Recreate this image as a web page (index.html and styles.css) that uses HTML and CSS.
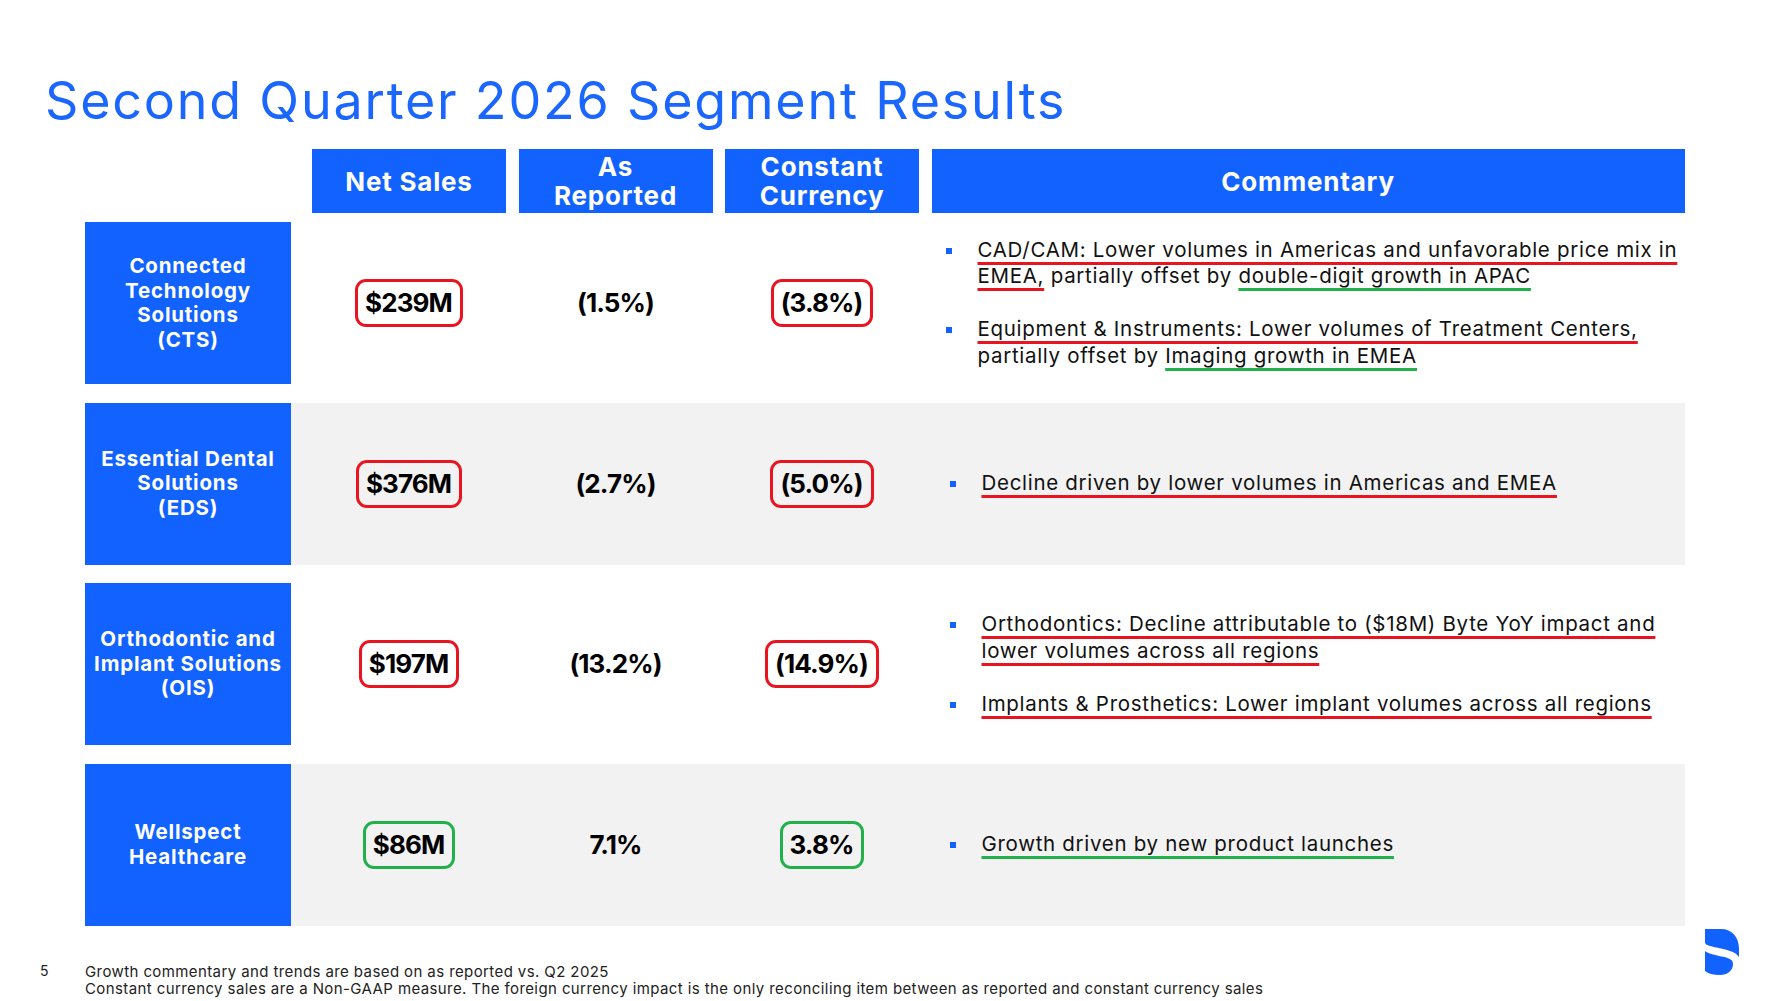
FILE: index.html
```html
<!DOCTYPE html>
<html lang="en">
<head>
<meta charset="utf-8">
<title>Second Quarter 2026 Segment Results</title>
<link rel="stylesheet" href="styles.css">
</head>
<body>
<div class="slide">
  <h1 class="title">Second Quarter 2026 Segment Results</h1>

  <div class="table">
    <div class="head-row">
      <div class="hcell">Net Sales</div>
      <div class="hcell">As<br>Reported</div>
      <div class="hcell">Constant<br>Currency</div>
      <div class="hcell wide">Commentary</div>
    </div>

    <div class="row first">
      <div class="label">Connected<br>Technology<br>Solutions<br>(CTS)</div>
      <div class="body">
        <div class="val"><span class="pill red">$239M</span></div>
        <div class="val">(1.5%)</div>
        <div class="val"><span class="pill red">(3.8%)</span></div>
        <div class="comm">
          <ul class="bullets">
            <li><div class="bt"><span class="ur">CAD/CAM: Lower volumes in Americas and unfavorable price mix in<br>EMEA,</span> partially offset by <span class="ug">double-digit growth in APAC</span></div></li>
            <li><div class="bt"><span class="ur">Equipment &amp; Instruments: Lower volumes of Treatment Centers,</span><br>partially offset by <span class="ug">Imaging growth in EMEA</span></div></li>
          </ul>
        </div>
      </div>
    </div>

    <div class="row alt">
      <div class="label">Essential Dental<br>Solutions<br>(EDS)</div>
      <div class="body">
        <div class="val"><span class="pill red">$376M</span></div>
        <div class="val">(2.7%)</div>
        <div class="val"><span class="pill red">(5.0%)</span></div>
        <div class="comm">
          <ul class="bullets shift">
            <li><div class="bt"><span class="ur">Decline driven by lower volumes in Americas and EMEA</span></div></li>
          </ul>
        </div>
      </div>
    </div>

    <div class="row">
      <div class="label">Orthodontic and<br>Implant Solutions<br>(OIS)</div>
      <div class="body">
        <div class="val"><span class="pill red">$197M</span></div>
        <div class="val">(13.2%)</div>
        <div class="val"><span class="pill red">(14.9%)</span></div>
        <div class="comm">
          <ul class="bullets shift">
            <li><div class="bt"><span class="ur">Orthodontics: Decline attributable to ($18M) Byte YoY impact and<br>lower volumes across all regions</span></div></li>
            <li><div class="bt"><span class="ur">Implants &amp; Prosthetics: Lower implant volumes across all regions</span></div></li>
          </ul>
        </div>
      </div>
    </div>

    <div class="row alt">
      <div class="label">Wellspect<br>Healthcare</div>
      <div class="body">
        <div class="val"><span class="pill green">$86M</span></div>
        <div class="val">7.1%</div>
        <div class="val"><span class="pill green">3.8%</span></div>
        <div class="comm">
          <ul class="bullets shift">
            <li><div class="bt"><span class="ug">Growth driven by new product launches</span></div></li>
          </ul>
        </div>
      </div>
    </div>
  </div>

  <div class="foot">
    <div class="page">5</div>
    <div class="notes">
      <div>Growth commentary and trends are based on as reported vs. Q2 2025</div>
      <div>Constant currency sales are a Non-GAAP measure. The foreign currency impact is the only reconciling item between as reported and constant currency sales</div>
    </div>
    <svg class="logo" width="34" height="46" viewBox="0 0 34 46" aria-hidden="true">
      <path d="M0 0 H16 C27 0 34 8 34 20 V28 C31 23.5 25 21.5 16 19.5 C7 17.5 1 16.5 0 14 Z" fill="#1162ff"/>
      <path d="M0 22 C3 24.5 10 26 18 27.8 C25 29.4 28 31 28 35 C28 41.5 22.5 46 15 46 C8 46 3 44.5 0 42 Z" fill="#1162ff"/>
    </svg>
  </div>
</div>
</body>
</html>
```

FILE: styles.css
```css
* { box-sizing: border-box; }

body {
  margin: 0;
  background: #ffffff;
  font-family: Inter, "Noto Sans", "DejaVu Sans", sans-serif;
  color: #111111;
}

.slide {
  width: 1785px;
  height: 1001px;
  overflow: hidden;
  background: #ffffff;
}

.title {
  margin: 0;
  padding: 69px 0 0 45px;
  height: 133px;
  font-size: 52px;
  font-weight: 400;
  line-height: 64px;
  color: #1a66ff;
  letter-spacing: 1.8px;
  white-space: nowrap;
}

.table {
  margin: 16px 0 0 85px;
  width: 1600px;
}

.head-row {
  display: flex;
  gap: 12.5px;
  padding-left: 227px;
  height: 64px;
}

.hcell {
  width: 194px;
  background: #1162ff;
  color: #ffffff;
  font-weight: 700;
  font-size: 26px;
  line-height: 29px;
  letter-spacing: 0.8px;
  text-align: center;
  display: flex;
  align-items: center;
  justify-content: center;
}

.hcell.wide { width: 753px; }

.row {
  display: flex;
  height: 162px;
  margin-top: 18.5px;
}

.row.first { margin-top: 9px; }

.label {
  width: 206px;
  flex: none;
  background: #1162ff;
  color: #ffffff;
  font-weight: 700;
  font-size: 20.5px;
  line-height: 24.5px;
  letter-spacing: 0.8px;
  text-align: center;
  white-space: nowrap;
  display: flex;
  align-items: center;
  justify-content: center;
}

.body {
  width: 1393.5px;
  display: flex;
  align-items: center;
  gap: 12.5px;
  padding-left: 21px;
}

.row.alt .body { background: #f2f2f2; }

.val {
  width: 194px;
  flex: none;
  text-align: center;
  font-weight: 700;
  font-size: 26px;
  line-height: 36px;
  letter-spacing: -0.9px;
  color: #000000;
}

.pill {
  display: inline-block;
  border: 3px solid #e8141f;
  border-radius: 11px;
  padding: 3px 8px 3px 7px;
  line-height: 36px;
}

.pill.red { border-color: #e8141f; }
.pill.green { border-color: #22b04b; }

.comm {
  width: 753px;
  flex: none;
  font-size: 20.5px;
  line-height: 26.5px;
  letter-spacing: 0.7px;
  color: #111111;
  white-space: nowrap;
}

.bullets {
  list-style: none;
  margin: 0;
  padding: 0 0 0 14px;
}

.bullets.shift { padding-left: 18px; }

.bullets li {
  display: flex;
  align-items: flex-start;
}

.bullets li + li { margin-top: 26.5px; }

.bullets li::before {
  content: "";
  flex: none;
  width: 6px;
  height: 6px;
  margin-top: 11px;
  margin-right: 26px;
  background: #1162ff;
}

.ur,
.ug {
  text-decoration-line: underline;
  text-decoration-thickness: 3px;
  text-underline-offset: 5px;
  text-decoration-skip-ink: none;
}

.ur { text-decoration-color: #e8141f; }
.ug { text-decoration-color: #22b04b; }

.foot {
  display: flex;
  align-items: flex-start;
  margin-top: 3px;
  height: 72px;
}

.page {
  width: 85px;
  padding: 33px 0 0 40px;
  font-size: 14px;
  line-height: 17px;
  color: #222222;
}

.notes {
  flex: 1;
  padding-top: 34px;
  font-size: 15px;
  line-height: 17px;
  letter-spacing: 0.4px;
  color: #222222;
  white-space: nowrap;
}

.logo {
  display: block;
  margin-right: 46px;
}
```
